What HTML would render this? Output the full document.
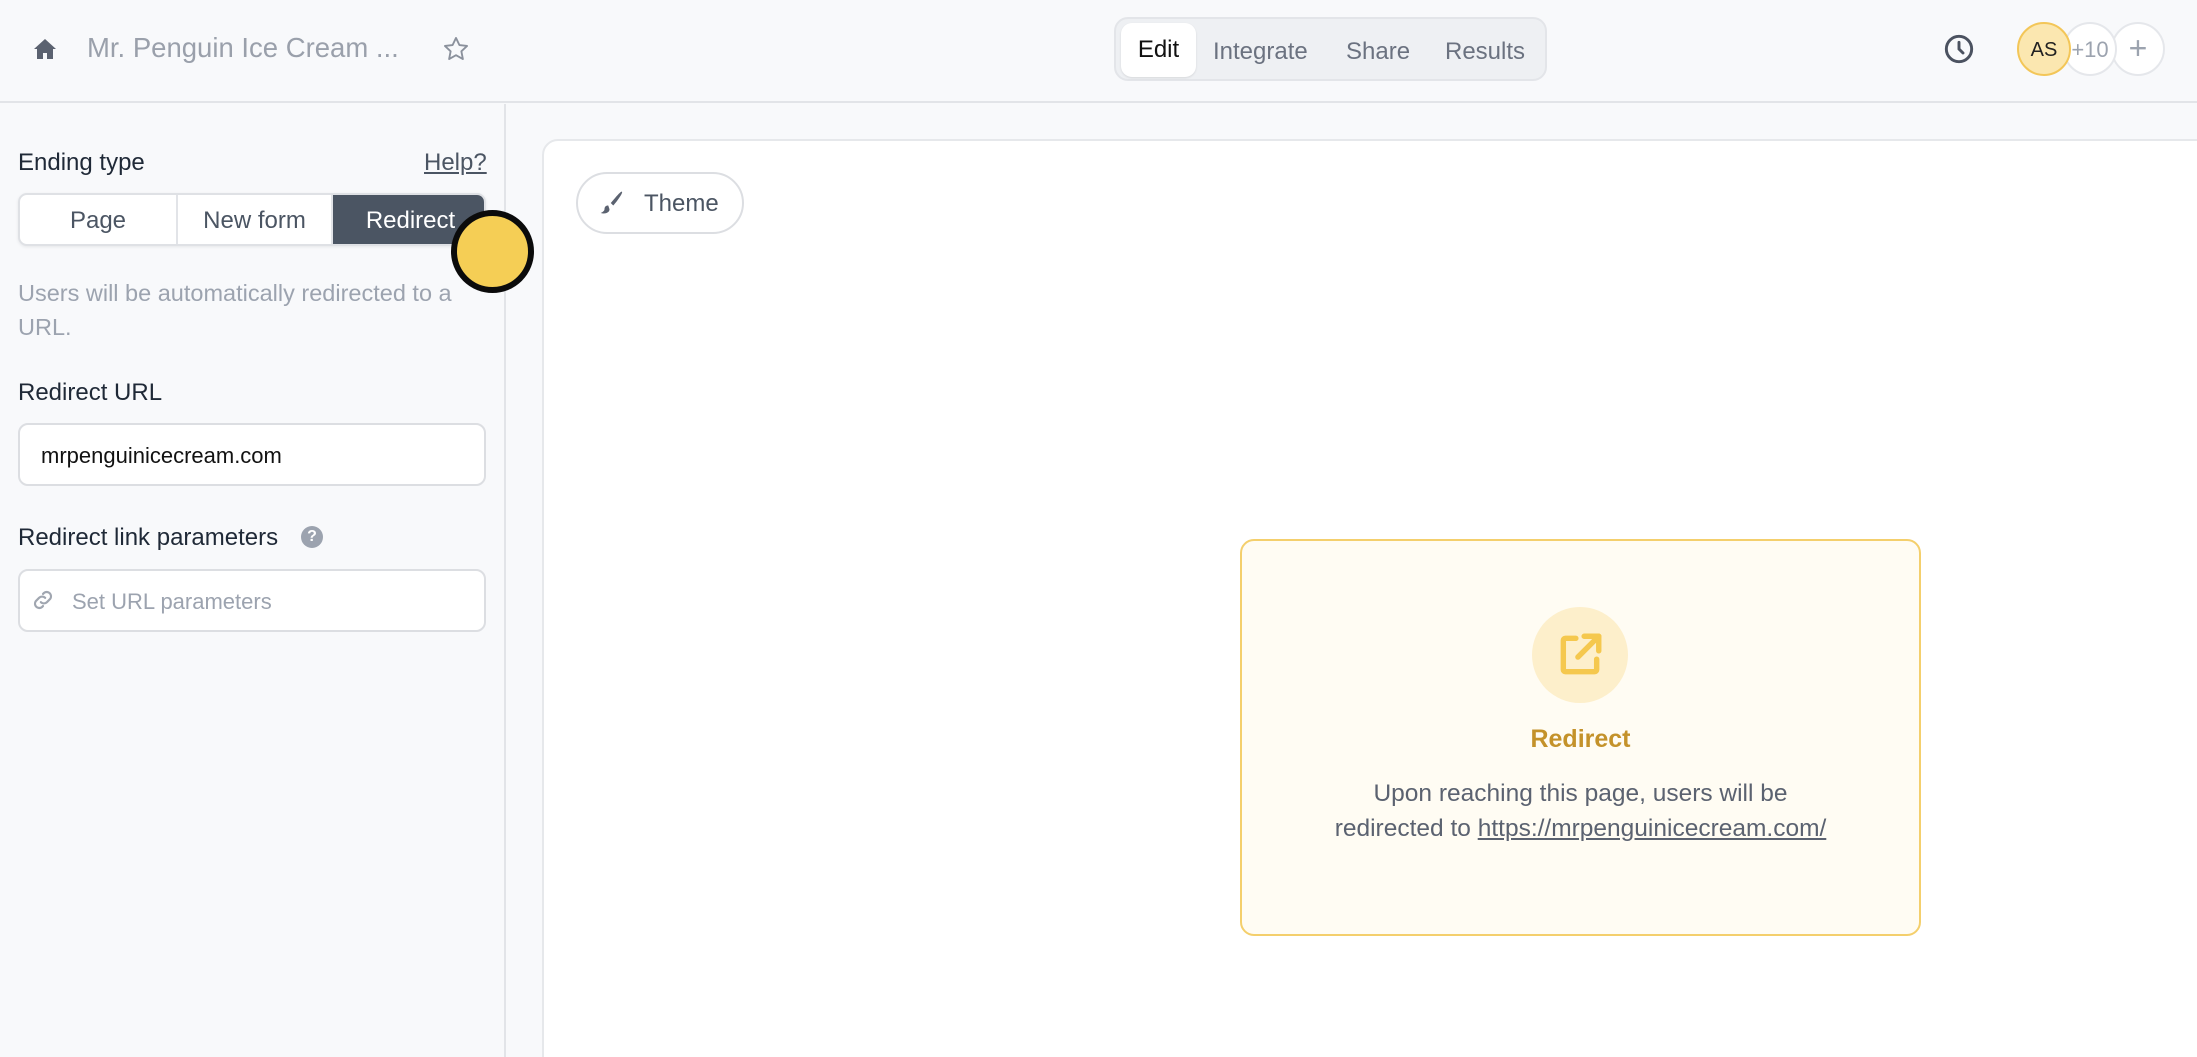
<!DOCTYPE html>
<html><head><meta charset="utf-8"><style>
*{box-sizing:border-box;margin:0;padding:0}
html,body{width:2197px;height:1057px;overflow:hidden}
body{background:#f8f9fb;font-family:"Liberation Sans",sans-serif;position:relative;color:#111827}
.abs{position:absolute}
.hdr{left:0;top:0;width:2197px;height:103px;border-bottom:2px solid #e2e4e8;background:#f8f9fb}
.title{left:87px;top:32px;font-size:27.5px;color:#9aa0ab}
.tabs{left:1114px;top:17px;width:433px;height:64px;background:#eef0f3;border:2px solid #e3e5e9;border-radius:14px}
.tab{position:absolute;top:19px;font-size:24px;color:#6b7280}
.edit{left:5px;top:4px;width:75px;height:54px;background:#fff;border-radius:11px;font-size:24px;color:#111;text-align:center;line-height:54px;box-shadow:0 1px 2px rgba(0,0,0,.1)}
.av{width:54px;height:54px;border-radius:50%;top:22px;text-align:center;line-height:52px;font-size:22px}
.side{left:0;top:104px;width:506px;height:953px;border-right:2px solid #e2e4e8}
.lbl{font-size:24px;color:#1f2937;left:18px}
.seg{left:18px;top:193px;width:468px;height:53px;border:2px solid #dfe1e5;border-radius:9px;background:#fff;overflow:hidden;box-shadow:0 1px 3px rgba(0,0,0,.08)}
.seg div{position:absolute;top:0;height:51px;line-height:51px;text-align:center;font-size:24px;color:#4b5563}
.inp{left:18px;width:468px;height:63px;border:2px solid #dcdee2;border-radius:10px;background:#fff;font-size:22px}
.main{left:542px;top:139px;width:1700px;height:960px;background:#fff;border:2px solid #e6e8eb;border-radius:16px}
.card{left:1240px;top:539px;width:681px;height:397px;background:#fffcf3;border:2px solid #f4cf6c;border-radius:14px}
</style></head><body>
<div class="abs hdr"></div>
<svg class="abs" style="left:33px;top:37px" width="24" height="24" viewBox="0 0 24 24"><path d="M12 2 1 12h3v10h6v-6h4v6h6V12h3z" fill="#5b6270"/></svg>
<div class="abs title">Mr. Penguin Ice Cream ...</div>
<svg class="abs" style="left:442px;top:35px" width="28" height="28" viewBox="0 0 24 24"><path d="M12 2.5l2.9 6.1 6.6.8-4.9 4.6 1.3 6.6L12 17.3 6.1 20.6l1.3-6.6L2.5 9.4l6.6-.8z" fill="none" stroke="#8b919c" stroke-width="1.6" stroke-linejoin="round"/></svg>
<div class="abs tabs"><div class="abs edit">Edit</div>
<div class="tab" style="left:97px">Integrate</div><div class="tab" style="left:230px">Share</div><div class="tab" style="left:329px">Results</div></div>
<svg class="abs" style="left:1943px;top:33px" width="32" height="32" viewBox="0 0 24 24"><circle cx="12" cy="12" r="9.5" fill="none" stroke="#4b5260" stroke-width="2.2"/><path d="M12 7v5l3 3" fill="none" stroke="#4b5260" stroke-width="2.2" stroke-linecap="round"/></svg>
<div class="abs av" style="left:2111px;background:#fff;border:2px solid #e5e7eb;color:#9ca3af;font-size:32px;line-height:48px">+</div>
<div class="abs av" style="left:2063px;background:#fff;border:2px solid #e5e7eb;color:#9ca3af">+10</div>
<div class="abs av" style="left:2017px;background:#fbe7b0;border:2px solid #f3c658;color:#222;font-size:20px">AS</div>

<div class="abs side"></div>
<div class="abs lbl" style="top:149px">Ending type</div>
<div class="abs" style="left:424px;top:149px;font-size:24px;color:#4b5563;text-decoration:underline">Help?</div>
<div class="abs seg"><div style="left:0;width:156px">Page</div><div style="left:156px;width:157px;border-left:2px solid #e2e4e8;border-right:2px solid #e2e4e8">New form</div><div style="left:313px;width:155px;background:#4b5563;color:#fff">Redirect</div></div>
<div class="abs" style="left:18px;top:276px;width:520px;font-size:23.5px;line-height:34px;color:#9ca3af">Users will be automatically redirected to a<br>URL.</div>
<div class="abs" style="left:451px;top:210px;width:83px;height:83px;border-radius:50%;background:#f5ce55;border:6px solid #0b0b0b"></div>
<div class="abs lbl" style="top:379px">Redirect URL</div>
<div class="abs inp" style="top:423px;padding:18px 21px;color:#111">mrpenguinicecream.com</div>
<div class="abs lbl" style="top:524px">Redirect link parameters</div>
<div class="abs" style="left:301px;top:526px;width:22px;height:22px;border-radius:50%;background:#9ca3af;color:#fff;font-size:16px;font-weight:bold;text-align:center;line-height:22px">?</div>
<div class="abs inp" style="top:569px;padding:18px 0 0 52px;color:#9ca3af">Set URL parameters</div>
<svg class="abs" style="left:30px;top:587px" width="26" height="26" viewBox="0 0 24 24" fill="none" stroke="#a0a6b0" stroke-width="2" stroke-linecap="round"><path d="M10 14a4 4 0 0 0 5.6 0l3-3a4 4 0 0 0-5.6-5.6l-1 1"/><path d="M14 10a4 4 0 0 0-5.6 0l-3 3a4 4 0 0 0 5.6 5.6l1-1"/></svg>

<div class="abs main"></div>
<div class="abs" style="left:576px;top:172px;width:168px;height:62px;border:2px solid #dcdee2;border-radius:31px;background:#fff"></div>
<svg class="abs" style="left:597px;top:188px" width="30" height="30" viewBox="0 0 24 24"><path d="M20 3c1 1-5 9-7 11l-2-2C13 10 19 2 20 3z" fill="#5b6270"/><path d="M9 14c-2 0-3 1-3 3 0 1-1 2-3 3 3 1 7 0 7-3z" fill="#5b6270"/></svg>
<div class="abs" style="left:644px;top:190px;font-size:24px;color:#4b5563">Theme</div>

<div class="abs card"></div>
<div class="abs" style="left:1532px;top:607px;width:96px;height:96px;border-radius:50%;background:#fdefcb"></div>
<svg class="abs" style="left:1555px;top:630px" width="50" height="50" viewBox="0 0 24 24" fill="none" stroke="#f5c84e" stroke-width="2.6" stroke-linecap="round" stroke-linejoin="round"><path d="M10 4H5a1 1 0 0 0-1 1v14a1 1 0 0 0 1 1h14a1 1 0 0 0 1-1v-5"/><path d="M14 3h7v7"/><path d="M21 3 11 13"/></svg>
<div class="abs" style="left:1240px;top:725px;width:681px;text-align:center;font-size:25px;font-weight:bold;color:#c4922a">Redirect</div>
<div class="abs" style="left:1240px;top:776px;width:681px;text-align:center;font-size:24.5px;line-height:35px;color:#5b6270">Upon reaching this page, users will be<br>redirected to <u>https://mrpenguinicecream.com/</u></div>
</body></html>
